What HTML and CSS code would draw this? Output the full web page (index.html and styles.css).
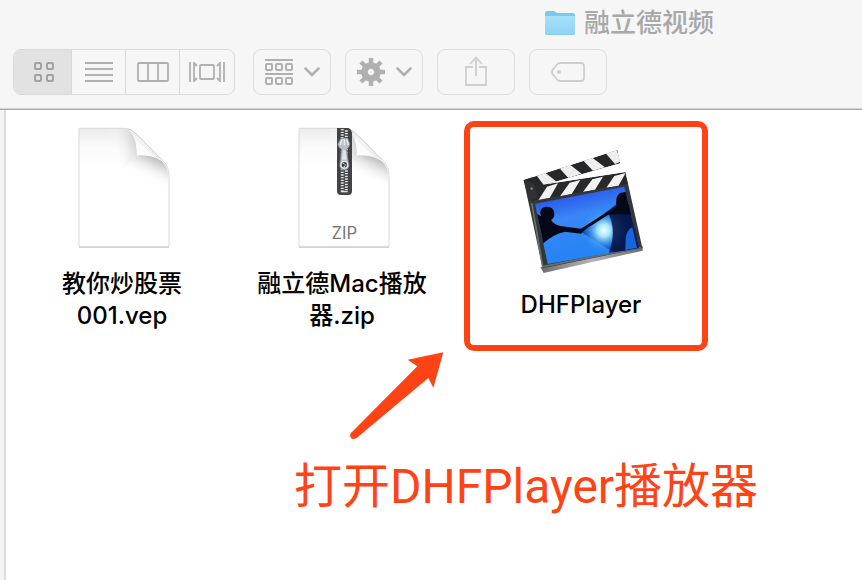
FILE: index.html
```
<!DOCTYPE html>
<html lang="zh-CN">
  <head>
    <meta charset="utf-8">
    <title>融立德视频</title>
    <link rel="stylesheet" href="styles.css">
  </head>
  <body>
    <header class="titlebar">
      <h1 class="title">
        <svg class="folder" width="32" height="26" viewBox="0 0 32 26">
          <defs>
            <linearGradient id="folder-front" x1="0" y1="0" x2="0" y2="1">
              <stop offset="0" stop-color="#a9e0fb"/>
              <stop offset="1" stop-color="#8dd3f5"/>
            </linearGradient>
          </defs>
          <path d="M1 3q0-2 2-2h7l3 2h16q2 0 2 2v18q0 2-2 2H3q-2 0-2-2z" fill="#7cc8ee"/>
          <path d="M1 6h30v17q0 1.500-2 1.500H3q-2 0-2-1.500z" fill="url(#folder-front)"/>
        </svg>
        融立德视频
      </h1>
      <div class="toolbar">
        <div class="views">
          <button class="view active" aria-label="图标">
            <svg width="20" height="20" fill="none" stroke="#a2a2a2" stroke-width="2">
              <rect x="1" y="1" width="6" height="6" rx="1"/>
              <rect x="13" y="1" width="6" height="6" rx="1"/>
              <rect x="1" y="13" width="6" height="6" rx="1"/>
              <rect x="13" y="13" width="6" height="6" rx="1"/>
            </svg>
          </button>
          <button class="view" aria-label="列表">
            <svg width="28" height="20" stroke="#b0b0b0" stroke-width="1.800">
              <path d="M0 1h28M0 7h28M0 13h28M0 19h28"/>
            </svg>
          </button>
          <button class="view" aria-label="分栏">
            <svg width="32" height="20" fill="none" stroke="#b0b0b0" stroke-width="1.800">
              <rect x="1" y="1" width="30" height="18" rx="1"/>
              <path d="M11 1v18M21 1v18"/>
            </svg>
          </button>
          <button class="view" aria-label="封面流">
            <svg width="36" height="20" fill="none" stroke="#b0b0b0" stroke-width="1.800">
              <rect x="11" y="3" width="14" height="14" rx="1"/>
              <path d="M1 0v20M35 0v20M5 0v20M31 0v20M5 1l3 3M5 19l3-3M31 1l-3 3M31 19l-3-3"/>
            </svg>
          </button>
        </div>
        <button class="tool" aria-label="排列">
          <svg width="28" height="26" fill="none" stroke="#b0b0b0" stroke-width="2">
            <path d="M0 1h28M0 15h28"/>
            <rect x="1" y="5" width="6" height="6" rx="1"/>
            <rect x="11" y="5" width="6" height="6" rx="1"/>
            <rect x="21" y="5" width="6" height="6" rx="1"/>
            <rect x="1" y="19" width="6" height="6" rx="1"/>
            <rect x="11" y="19" width="6" height="6" rx="1"/>
            <rect x="21" y="19" width="6" height="6" rx="1"/>
          </svg>
          <svg width="16" height="10" fill="none" stroke="#b0b0b0" stroke-width="2.500">
            <path d="M1.500 1.500l6.500 6.500l6.500-6.500" stroke-linecap="round"/>
          </svg>
        </button>
        <button class="tool" aria-label="操作">
          <svg width="28" height="28" viewBox="-14 -14 28 28">
            <g stroke="#b0b0b0" stroke-width="4.400">
              <path d="M0-14v8M0 14v-8M-14 0h8M14 0h-8M-10-10l5 5M10 10l-5-5M-10 10l5-5M10-10l-5 5"/>
              <circle r="6.500" fill="none" stroke-width="6.600"/>
            </g>
          </svg>
          <svg width="16" height="10" fill="none" stroke="#b0b0b0" stroke-width="2.500">
            <path d="M1.500 1.500l6.500 6.500l6.500-6.500" stroke-linecap="round"/>
          </svg>
        </button>
        <button class="tool share" aria-label="共享">
          <svg width="22" height="30" fill="none" stroke="#cfcfcf" stroke-width="1.800">
            <path d="M8 11H1v18h20V11h-7M11 20V1.500M5 8l6-6.500l6 6.500"/>
          </svg>
        </button>
        <button class="tool" aria-label="标签">
          <svg width="34" height="20" fill="none" stroke="#cfcfcf" stroke-width="1.800">
            <path d="M9 1h21q3 0 3 3v12q0 3-3 3H9q-2 0-3-1.500L1.500 12q-1-2 0-4L6 2.500Q7 1 9 1z"/>
            <circle cx="8" cy="10" r="2" fill="#cfcfcf" stroke="none"/>
          </svg>
        </button>
      </div>
    </header>

    <div class="window">
      <div class="sidebar"></div>
      <main class="content">
        <ul class="files">
          <li class="file">
            <svg width="92" height="122" viewBox="84 36 276 366">
              <defs>
                <linearGradient id="paper" x1="0" y1="0" x2="0" y2="1">
                  <stop offset="0" stop-color="#ececec"/>
                  <stop offset="0.160" stop-color="#fafafa"/>
                  <stop offset="0.350" stop-color="#fff"/>
                </linearGradient>
                <linearGradient id="fold-shade" gradientUnits="userSpaceOnUse" x1="312" y1="118" x2="278" y2="188">
                  <stop offset="0" stop-color="#b4b4b4"/>
                  <stop offset="0.400" stop-color="#e2e2e2"/>
                  <stop offset="1" stop-color="#fff" stop-opacity="0"/>
                </linearGradient>
                <linearGradient id="fold-side" gradientUnits="userSpaceOnUse" x1="264" y1="90" x2="190" y2="110">
                  <stop offset="0" stop-color="#cfcfcf"/>
                  <stop offset="1" stop-color="#fff" stop-opacity="0"/>
                </linearGradient>
                <linearGradient id="curl" gradientUnits="userSpaceOnUse" x1="260" y1="118" x2="294" y2="84">
                  <stop offset="0" stop-color="#fff"/>
                  <stop offset="0.600" stop-color="#fafafa"/>
                  <stop offset="1" stop-color="#dcdcdc"/>
                </linearGradient>
                <g id="document">
                  <path d="M87 397H357" stroke="#cbcbcb" stroke-width="3"/>
                  <path d="M87 40H222Q242 40 256 54L340 138Q357 155 357 182V394H87z" fill="url(#paper)" stroke="#d9d9d9" stroke-width="3"/>
                  <path d="M180 42H222Q258 46 261 120L200 180z" fill="url(#fold-side)"/>
                  <path d="M261 121Q356 118 355 188V230L200 180z" fill="url(#fold-shade)"/>
                  <path d="M230 41Q264 60 261 121Q300 117 335 134z" fill="url(#curl)"/>
                  <path d="M230 41Q246 44 256 54L335 134" fill="none" stroke="#c9c9c9" stroke-width="2"/>
                </g>
              </defs>
              <use href="#document"/>
            </svg>
            <span class="name">教你炒股票<br>001.vep</span>
          </li>
          <li class="file">
            <svg width="92" height="122" viewBox="84 36 276 366">
              <use href="#document"/>
              <path d="M201 39H236Q243 43 246 52V228Q246 240 234 240H213Q201 240 201 228z" fill="#424247"/>
              <path d="M217 42V230" stroke="#e4e4e4" stroke-width="9" stroke-dasharray="4 4"/>
              <path d="M229 46V230" stroke="#e4e4e4" stroke-width="9" stroke-dasharray="4 4"/>
              <path d="M223 42V230" stroke="#55555a" stroke-width="3"/>
              <path d="M213 230h20" stroke="#ddd" stroke-width="4"/>
              <path d="M213 69h20l7 18q-2 12-10 16l7 50q-2 12-14 12t-14-12l5-50q-9-4-11-16z" fill="#b6c0c5" stroke="#65727a" stroke-width="2"/>
              <path d="M216 73l-5 17M223 73v18M230 73l5 17" stroke="#e8eef0" stroke-width="4"/>
              <path d="M219 106h8l3 28h-14z" fill="#e0e7e9"/>
              <circle cx="223" cy="149" r="12" fill="#e5e7e8"/>
              <circle cx="223" cy="149" r="8" fill="#3c3e42"/>
              <path d="M218 145h5M223 150h6M221 155h4" stroke="#ddd" stroke-width="3"/>
              <text class="kind" x="223" y="372" text-anchor="middle">ZIP</text>
            </svg>
            <span class="name">融立德Mac播放<br>器.zip</span>
          </li>
          <li class="file selected">
            <svg width="124" height="127" viewBox="198 103 372 381">
              <defs>
                <linearGradient id="screen" x1="0" y1="0" x2="0.300" y2="1">
                  <stop offset="0" stop-color="#1a3ae0"/>
                  <stop offset="0.450" stop-color="#3b86f6"/>
                  <stop offset="1" stop-color="#2383f5"/>
                </linearGradient>
                <radialGradient id="glow" gradientUnits="userSpaceOnUse" cx="447" cy="347" r="75">
                  <stop offset="0" stop-color="#f2ffff"/>
                  <stop offset="0.250" stop-color="#a6e8ff"/>
                  <stop offset="0.600" stop-color="#3ba1ff" stop-opacity="0.700"/>
                  <stop offset="1" stop-color="#2080f0" stop-opacity="0"/>
                </radialGradient>
                <linearGradient id="rim" x1="0" y1="0" x2="1" y2="0">
                  <stop offset="0" stop-color="#6e6e70"/>
                  <stop offset="0.500" stop-color="#b5b3b5"/>
                  <stop offset="1" stop-color="#6d6d70"/>
                </linearGradient>
                <clipPath id="top-bar"><path d="M206 196L487 106L496 146L222 224z"/></clipPath>
                <clipPath id="low-bar"><path d="M222 216L512 172L519 208L228 260z"/></clipPath>
                <clipPath id="frame"><path d="M240 267L508 216L552 400L278 448z"/></clipPath>
              </defs>
              <path d="M256 458L563 394L563 408L266 475z" fill="url(#rim)"/>
              <path d="M206 196L232 188L260 250L517 198L562 400L263 461z" fill="#343638"/>
              <path d="M230 265L263 456L558 398" fill="none" stroke="#68706c" stroke-width="5"/>
              <path d="M240 267L508 216L552 400L278 448z" fill="url(#screen)"/>
              <g clip-path="url(#frame)">
                <path d="M375 350L482 270L560 280V410H470z" fill="#0b2b91"/>
                <circle cx="447" cy="347" r="75" fill="url(#glow)"/>
                <path d="M462 300Q485 350 462 414L560 410V260L490 270z" fill="#06143f" opacity="0.850"/>
                <path d="M235 290L258 305Q250 279 273 276Q295 275 298 294Q299 310 288 316Q297 330 316 334L378 342L484 274Q480 246 495 235L520 230L530 300L496 298L460 300L392 343L378 357L330 351Q292 360 266 385L250 400z" fill="#040817"/>
                <path d="M512 370Q516 345 532 338L546 400L511 406z" fill="#1767dc"/>
              </g>
              <g clip-path="url(#top-bar)">
                <path d="M206 196L487 106L496 146L222 224z" fill="#262729"/>
                <path d="M243 180L268 172L306 202L268 213zM315 162L342 148L380 177L340 190zM383 136L410 128L450 158L414 168zM452 116L484 106L500 140L480 148z" fill="#eee"/>
              </g>
              <g clip-path="url(#low-bar)">
                <path d="M222 216L512 172L519 208L228 260z" fill="#29292b"/>
                <path d="M276 216L309 206L284 250L250 257zM344 204L376 196L350 238L314 246zM412 194L444 186L420 225L384 232zM478 184L512 175L490 214L454 219z" fill="#f2f2f2"/>
              </g>
              <path d="M206 196L236 206L250 250L222 258z" fill="#303133"/>
              <circle cx="230" cy="222" r="4" fill="#777"/>
            </svg>
            <span class="name">DHFPlayer</span>
          </li>
        </ul>
        <div class="hint">
          <svg class="arrow" width="96" height="90" viewBox="0 0 288 270">
            <path d="M6 246L205 46L176 26L283 4L253 110L238 81L22 262Q12 267 5 260Q0 253 6 246z" fill="#ff4314"/>
          </svg>
          <p class="hint-text">打开DHFPlayer播放器</p>
        </div>
      </main>
    </div>
  </body>
</html>
```
FILE: styles.css
```
body {
  display: flex;
  flex-direction: column;
  min-height: 100vh;
  margin: 0;
  background: #fff;
  color: #000;
  font-family: Inter, "Noto Sans CJK SC", sans-serif;
}

.titlebar {
  padding-bottom: 13px;
  background: #f6f6f6;
  border-bottom: 1px solid #a9a9a9;
  box-shadow: inset 0 -1px #d4d4d4;
}

.title {
  display: flex;
  align-items: center;
  gap: 8px;
  margin: 0 0 3px;
  padding-left: 544px;
  color: #a8a8a8;
  font-size: 26px;
  font-weight: 500;
  line-height: 46px;
  white-space: nowrap;
}

.toolbar {
  display: flex;
  gap: 14px;
  padding: 0 13px 1px;
}

.views {
  display: flex;
  box-sizing: border-box;
  width: 222px;
  height: 46px;
  margin-right: 4px;
  overflow: hidden;
  border: 1px solid #d9d9d9;
  border-radius: 8px;
}

.view {
  display: flex;
  align-items: center;
  justify-content: center;
  box-sizing: border-box;
  width: 54px;
  padding: 0;
  border: 0;
  border-right: 1px solid #d9d9d9;
  background: #f6f6f6;
}

.view:last-child {
  flex: 1;
  border-right: 0;
}

.view.active {
  width: 58px;
  padding-left: 3px;
  background: #e2e2e2;
}

.tool {
  display: flex;
  align-items: center;
  justify-content: center;
  gap: 11px;
  box-sizing: border-box;
  width: 78px;
  height: 46px;
  padding: 0;
  border: 1px solid #dcdcdc;
  border-radius: 8px;
  background: #f6f6f6;
}

.tool.share {
  padding-bottom: 2px;
}

.window {
  display: flex;
  flex: 1;
}

.sidebar {
  width: 4px;
  background: #f5f5f5;
  border-right: 2px solid #dcdcdc;
}

.content {
  flex: 1;
}

.files {
  display: flex;
  align-items: flex-start;
  margin: 0;
  padding: 11px 8px 0;
  list-style: none;
}

.file {
  display: flex;
  flex-direction: column;
  align-items: center;
  gap: 19px;
  width: 220px;
  padding-top: 6px;
}

.name {
  padding-right: 4px;
  font-size: 24px;
  font-weight: 500;
  line-height: 32px;
  text-align: center;
}

.kind {
  fill: #777;
  font-size: 50px;
}

/* the app to open */
.selected {
  box-sizing: border-box;
  gap: 13px;
  width: 244px;
  margin-left: 10px;
  padding: 22px 6px 24px 0;
  border: 6px solid #ff4314;
  border-radius: 10px;
}

.hint {
  padding-left: 288px;
  color: #ff4314;
}

.arrow {
  display: block;
  margin-left: 55px;
}

.hint-text {
  margin: 16px 0 0;
  font-family: Roboto, "Noto Sans CJK SC", sans-serif;
  font-size: 48px;
  line-height: 60px;
  white-space: nowrap;
}
```
